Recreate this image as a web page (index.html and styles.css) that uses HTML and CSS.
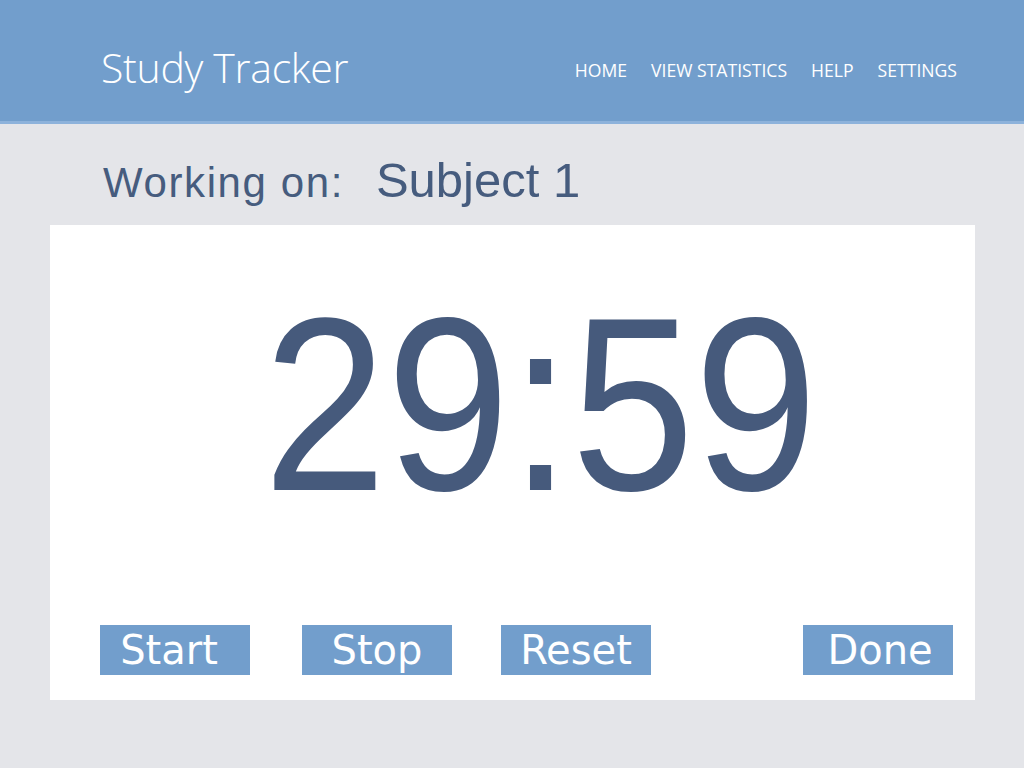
FILE: index.html
```html
<!DOCTYPE html>
<html lang="en">
<head>
<meta charset="utf-8">
<title>Study Tracker</title>
<link rel="stylesheet" href="styles.css">
</head>
<body>
<header class="topbar">
  <div class="brand">Study Tracker</div>
  <nav class="nav">
    <a href="#">HOME</a>
    <a href="#">VIEW STATISTICS</a>
    <a href="#">HELP</a>
    <a href="#">SETTINGS</a>
  </nav>
</header>
<section class="working">
  <span class="label">Working on:</span>
  <span class="subject">Subject 1</span>
</section>
<main class="panel">
  <div class="timer">29:59</div>
  <div class="buttons">
    <button class="btn btn-start">Start</button>
    <button class="btn btn-stop">Stop</button>
    <button class="btn btn-reset">Reset</button>
    <button class="btn btn-done">Done</button>
  </div>
</main>
</body>
</html>
```
FILE: styles.css
```css
* { box-sizing: border-box; }
html, body { margin: 0; padding: 0; }
body {
  width: 1024px;
  height: 768px;
  background: #e4e5e9;
  font-family: "Liberation Sans", Arial, sans-serif;
  overflow: hidden;
}
.topbar {
  height: 124px;
  background: #729ecc;
  border-bottom: 3px solid #8db2db;
  display: flex;
  align-items: flex-start;
  justify-content: space-between;
  padding: 0 67px 0 101px;
}
.brand {
  font-family: "Open Sans", "Noto Sans", sans-serif;
  font-weight: 300;
  font-size: 41px;
  color: #ffffff;
  line-height: 1;
  margin-top: 47px;
  letter-spacing: -0.3px;
}
.nav {
  display: flex;
  gap: 24px;
  margin-top: 59px;
}
.nav a {
  font-family: "Open Sans", "Noto Sans", sans-serif;
  font-size: 17.6px;
  line-height: 22px;
  color: #ffffff;
  text-decoration: none;
}
.working {
  height: 101px;
  display: flex;
  align-items: baseline;
  padding: 0 0 0 103px;
  color: #465c7e;
}
.label {
  font-size: 42px;
  letter-spacing: 1.6px;
  line-height: 1;
  margin-top: 38px;
}
.subject {
  font-size: 49px;
  margin-left: 32px;
  line-height: 1;
}
.panel {
  margin: 0 49px 0 50px;
  height: 475px;
  background: #ffffff;
  display: flex;
  flex-direction: column;
  padding-top: 57px;
}
.timer {
  font-size: 246px;
  line-height: 1;
  color: #465a7c;
  text-align: center;
  padding-left: 62px;
  transform: scaleX(0.9);
}
.buttons {
  margin-top: auto;
  margin-bottom: 25px;
  display: flex;
  padding: 0 22px 0 50px;
}
.btn {
  width: 150px;
  height: 50px;
  border: 0;
  padding: 0;
  background: #729ecc;
  color: #ffffff;
  font-family: "DejaVu Sans", Verdana, sans-serif;
  font-size: 40px;
  line-height: 50px;
  letter-spacing: 0;
}
.btn-start { padding-right: 12px; }
.btn-stop { margin-left: 52px; }
.btn-reset { margin-left: 49px; }
.btn-done { margin-left: auto; padding-left: 4px; }
```
